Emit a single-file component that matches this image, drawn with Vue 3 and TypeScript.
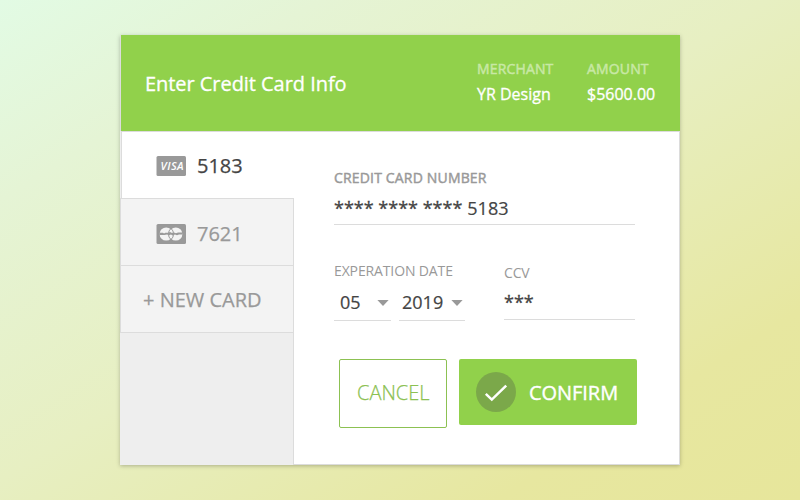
<script setup lang="ts">
import { ref } from 'vue'

interface SavedCard {
  brand: 'visa' | 'mastercard'
  digits: string
}

const cards: SavedCard[] = [
  { brand: 'visa', digits: '5183' },
  { brand: 'mastercard', digits: '7621' },
]
const selected = ref(0)
</script>

<template>
  <main class="page">
    <section class="panel">
      <header class="head">
        <h1 class="title">Enter Credit Card Info</h1>
        <div class="meta merchant">
          <span class="meta-label">MERCHANT</span>
          <span class="meta-value">YR Design</span>
        </div>
        <div class="meta">
          <span class="meta-label">AMOUNT</span>
          <span class="meta-value">$5600.00</span>
        </div>
      </header>
      <div class="body">
        <nav class="side">
          <div
            v-for="(card, i) in cards"
            :key="card.digits"
            class="tab"
            :class="{ active: i === selected }"
            @click="selected = i"
          >
            <svg class="brand" width="30" height="20" viewBox="0 0 30 20">
              <rect x="0.5" width="29.5" height="20" rx="1.5" fill="#999" />
              <text v-if="card.brand === 'visa'" class="visa" x="4.6" y="14" textLength="23">VISA</text>
              <g v-else>
                <circle cx="10.2" cy="10" r="6.6" fill="#f3f3f3" />
                <circle cx="19.8" cy="10" r="6.6" fill="#f3f3f3" />
                <path d="M15 4.4a7.4 7.4 0 0 0 0 11.2a7.4 7.4 0 0 0 0-11.2z" fill="none" stroke="#999" stroke-width="1" />
                <path d="M3.4 8.8h3.6l1 .8l1.4-.8h3l1.6-.8l2 1l2-.4l2 .6l2-.8h4.6v2h-3.6l-2 .8l-2-.6l-2.4.8l-1.6-.8l-2 .6l-2-.8l-2.6.6h-5z" fill="#999" />
              </g>
            </svg>
            <span class="digits">{{ card.digits }}</span>
          </div>
          <div class="tab new"><span>+ NEW CARD</span></div>
        </nav>
        <form class="form" @submit.prevent>
          <div class="field number">
            <span class="label strong">CREDIT CARD NUMBER</span>
            <span class="value"><span class="stars">**** **** ****</span><span class="last">5183</span></span>
          </div>
          <div class="row">
            <div class="expiry">
              <span class="label exp-label">EXPERATION DATE</span>
              <div class="selects">
                <div class="select month">
                  <span>05</span>
                  <svg width="12" height="6" viewBox="0 0 12 6"><path d="M0.4 0H11.6L6 6z" fill="#999" /></svg>
                </div>
                <div class="select year">
                  <span>2019</span>
                  <svg width="12" height="6" viewBox="0 0 12 6"><path d="M0.4 0H11.6L6 6z" fill="#999" /></svg>
                </div>
              </div>
            </div>
            <div class="ccv">
              <span class="label ccv-label">CCV</span>
              <span class="value ccv-value">***</span>
            </div>
          </div>
          <div class="actions">
            <button class="btn cancel" type="button"><span>CANCEL</span></button>
            <button class="btn confirm" type="submit">
              <svg width="40" height="40" viewBox="0 0 40 40">
                <circle cx="20" cy="20" r="20" fill="#7ba84a" />
                <path d="M9.8 21.8L15.8 27.6L30.2 13.6" fill="none" stroke="#fff" stroke-width="2.5" />
              </svg>
              <span class="confirm-text">CONFIRM</span>
            </button>
          </div>
        </form>
      </div>
    </section>
  </main>
</template>

<style>
body {
  margin: 0;
}
</style>

<style scoped>
* {
  box-sizing: border-box;
}
.page {
  width: 800px;
  height: 500px;
  padding: 35px 120px;
  background: linear-gradient(to bottom right, #e2fbe4 0%, #e5f4d5 20%, #e7efc2 48%, #e7e7a0 81%, #e7e69b 100%);
  font-family: 'Open Sans', 'Noto Sans', sans-serif;
  color: #444;
}
.panel {
  width: 560px;
  height: 430px;
  display: flex;
  flex-direction: column;
  background: #fff;
  box-shadow: 0 1px 4px rgba(0, 0, 0, 0.25);
}
.head {
  height: 96px;
  display: flex;
  padding: 22px 25px 0 24px;
  border-left: 1px solid #ddd;
  background: #91d14b;
  color: #fff;
}
.title {
  flex: 1;
  margin: 0;
  font-size: 20px;
  font-weight: 400;
  line-height: 53px;
  letter-spacing: -0.05px;
  -webkit-text-stroke: 0.3px #fff;
  white-space: nowrap;
}
.meta {
  width: 68px;
  display: flex;
  flex-direction: column;
  white-space: nowrap;
}
.merchant {
  width: 76px;
  margin-right: 34px;
}
.meta-label {
  font-size: 14px;
  line-height: 24px;
  letter-spacing: 0.15px;
  color: #c8e8a5;
  -webkit-text-stroke: 0.5px #c8e8a5;
}
.meta-value {
  font-size: 16px;
  line-height: 26px;
  -webkit-text-stroke: 0.3px #fff;
}
.body {
  flex: 1;
  display: flex;
}
.side {
  width: 174px;
  background: #eee;
  border-right: 1px solid #dcdcdc;
  display: flex;
  flex-direction: column;
}
.tab {
  height: 67px;
  display: flex;
  align-items: center;
  padding-left: 35px;
  border-left: 1px solid #dcdcdc;
  border-top: 1px solid #dcdcdc;
  background: #f3f3f3;
  color: #999;
  font-size: 20px;
  line-height: 28px;
  white-space: nowrap;
  -webkit-text-stroke: 0.25px currentColor;
}
.tab:not(.active):not(.new) {
  padding-top: 3px;
}
.tab.active {
  width: 174px;
  margin-left: 1px;
  background: #fff;
  color: #444;
  padding-left: 34px;
  padding-top: 1px;
}
.tab.new {
  height: 68px;
  padding-left: 22px;
  padding-top: 2px;
  border-bottom: 1px solid #dcdcdc;
}
.digits {
  padding-top: 1px;
}
.brand {
  display: block;
  margin-right: 11px;
}
.visa {
  font-size: 11px;
  font-weight: 600;
  font-style: italic;
  fill: #fff;
  stroke: none;
  -webkit-text-stroke: 0;
}
.form {
  flex: 1;
  border: 1px solid #dcdcdc;
  border-left: 0;
  padding: 35px 42px 0 40px;
}
.label {
  display: block;
  font-size: 14px;
  line-height: 22px;
  color: #999;
  white-space: nowrap;
}
.strong {
  letter-spacing: 0.17px;
  -webkit-text-stroke: 0.45px #999;
}
.exp-label {
  letter-spacing: -0.13px;
}
.value {
  display: flex;
  font-size: 18px;
  line-height: 26px;
  white-space: nowrap;
  -webkit-text-stroke: 0.2px #444;
}
.field {
  width: 301px;
  height: 58px;
  border-bottom: 1px solid #dcdcdc;
}
.number .value {
  margin-top: 6px;
}
.stars,
.ccv-value {
  -webkit-text-stroke: 0.3px #444;
}
.last {
  margin-left: 5px;
}
.row {
  display: flex;
  margin-top: 35px;
  height: 61px;
}
.expiry {
  width: 131px;
  margin-right: 39px;
}
.selects {
  display: flex;
  gap: 8px;
  margin-top: 7px;
}
.select {
  height: 32px;
  display: flex;
  justify-content: space-between;
  border-bottom: 1px solid #dcdcdc;
  font-size: 18px;
  line-height: 26px;
  -webkit-text-stroke: 0.2px #444;
}
.select svg {
  margin-top: 11px;
}
.month {
  width: 57px;
  padding: 0 2px 0 6px;
}
.year {
  width: 66px;
  padding: 0 2px 0 3px;
}
.ccv {
  width: 131px;
  height: 60px;
  padding-top: 2px;
  border-bottom: 1px solid #dcdcdc;
}
.ccv-label {
  letter-spacing: -0.15px;
}
.ccv-value {
  margin-top: 5px;
}
.actions {
  display: flex;
  align-items: flex-start;
  gap: 12px;
  margin: 38px 0 0 5px;
}
.btn {
  display: flex;
  align-items: center;
  padding: 0;
  border-radius: 2px;
  font-family: inherit;
  font-size: 20px;
  line-height: 28px;
  white-space: nowrap;
}
.cancel {
  width: 108px;
  height: 69px;
  padding: 0 0 2px 17px;
  border: 1px solid #8cc152;
  background: #fff;
  color: #8cc152;
  font-weight: 300;
  -webkit-text-stroke: 0.25px #8cc152;
}
.confirm {
  width: 178px;
  height: 66px;
  gap: 13px;
  padding-left: 17px;
  border: 0;
  background: #91d14b;
  color: #fff;
  -webkit-text-stroke: 0.4px #fff;
}
.confirm svg {
  flex: none;
}
.confirm-text {
  padding-top: 2px;
  letter-spacing: -0.05px;
}
</style>
